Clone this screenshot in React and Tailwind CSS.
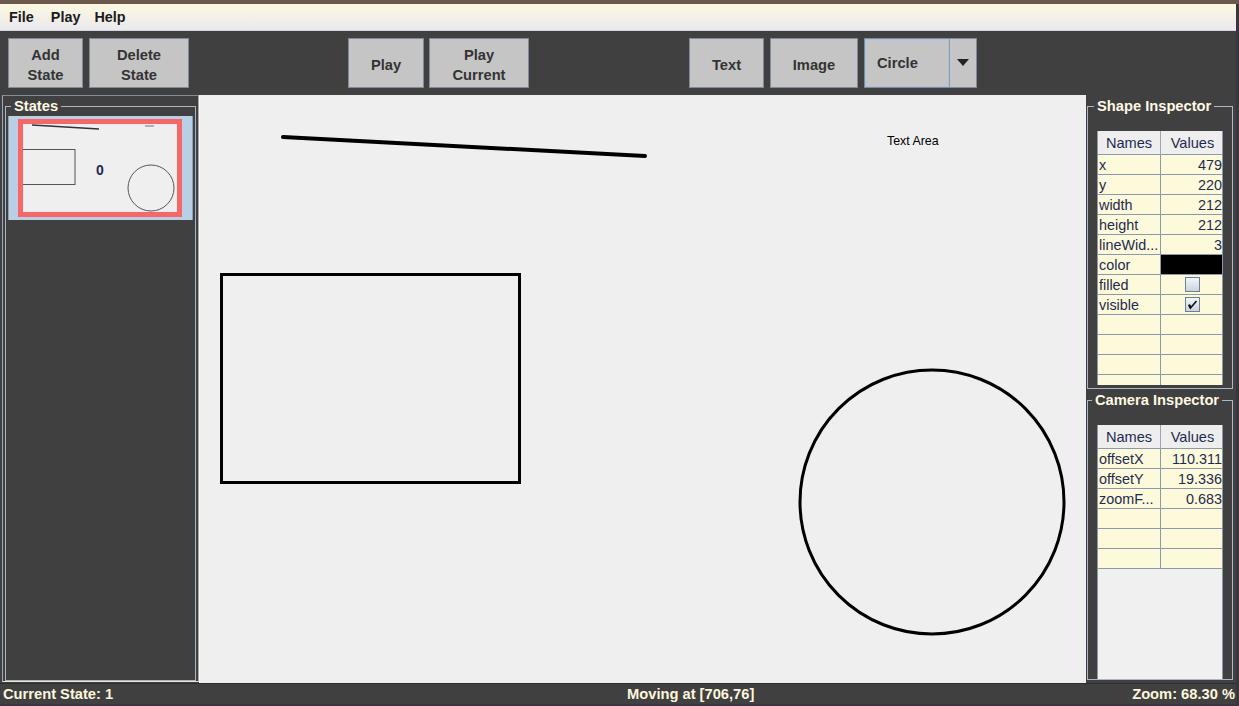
import React from "react";

const font = "font-['Liberation_Sans',Arial,sans-serif]";

function ToolButton({ lines, className = "" }) {
  return (
    <div
      className={`h-[50px] flex flex-col items-center justify-center pt-[5px] bg-[#c5c5c5] border border-[#7d8b9c] text-[#333333] font-bold text-[14.7px] leading-[20px] ${className}`}
    >
      {lines.map((l) => (
        <span key={l}>{l}</span>
      ))}
    </div>
  );
}

function Check({ checked }) {
  return (
    <div className="w-[15px] h-[15px] border border-[#6f7f93] bg-linear-to-b from-[#f4f7fb] to-[#c9d4e0] flex items-center justify-center">
      {checked && (
        <svg width="11" height="11" viewBox="0 0 11 11">
          <path d="M2 5.5 L3.5 9 L9.5 2" stroke="#111" strokeWidth="1.6" fill="none" />
          <path d="M2.2 6 L3.6 9" stroke="#111" strokeWidth="2.4" />
        </svg>
      )}
    </div>
  );
}

function Row({ name, value, kind }) {
  return (
    <div className="grid grid-cols-[63px_63px] h-[20px] border-b border-[#8d99ab] bg-[#fdfadc] text-[14.4px] leading-[20px] text-[#1f2a4e]">
      <div className="border-r border-[#8d99ab] pl-[1px] whitespace-nowrap overflow-hidden">{name}</div>
      {kind === "color" ? (
        <div className="bg-black" />
      ) : kind === "check" || kind === "checked" ? (
        <div className="flex items-center justify-center">
          <Check checked={kind === "checked"} />
        </div>
      ) : (
        <div className="text-right pr-[2px]">{value}</div>
      )}
    </div>
  );
}

function Table({ rows, empty, bg }) {
  return (
    <div className={`ml-[9px] w-[126px] h-[254px] overflow-hidden border-x border-[#8d99ab] ${bg}`}>
      <div className="grid grid-cols-[63px_63px] h-[24px] bg-[#eeeeee] border-b border-[#8d99ab] text-[14.6px] leading-[25px] text-[#1f2a4e]">
        <div className="text-center border-r border-[#9aa5b5]">Names</div>
        <div className="text-center">Values</div>
      </div>
      {rows.map((r) => (
        <Row key={r[0]} name={r[0]} value={r[1]} kind={r[2]} />
      ))}
      {Array.from({ length: empty }).map((_, i) => (
        <Row key={"e" + i} name="" value="" />
      ))}
    </div>
  );
}

export default function App() {
  return (
    <div className={`w-[1239px] h-[706px] bg-[#3b3540] ${font} overflow-hidden`}>
      <div className="h-[4px] bg-[#6b5a4c]" />
      <div className="w-[1236px] flex flex-col">
        {/* menu */}
        <div className="h-[27px] bg-linear-to-b from-[#fbf8e0] to-[#ebe9ee] flex items-center pt-[2px] text-[14.4px] font-bold text-[#1b1b1b] border-b border-[#d0d6de]">
          <span className="ml-[9px]">File</span>
          <span className="ml-[17px]">Play</span>
          <span className="ml-[14px]">Help</span>
        </div>

        {/* toolbar */}
        <div className="h-[64px] bg-[#404040] flex items-center pb-[1px]">
          <ToolButton lines={["Add", "State"]} className="ml-[8px] w-[75px]" />
          <ToolButton lines={["Delete", "State"]} className="ml-[6px] w-[100px]" />
          <ToolButton lines={["Play"]} className="ml-[159px] w-[76px]" />
          <ToolButton lines={["Play", "Current"]} className="ml-[5px] w-[100px]" />
          <ToolButton lines={["Text"]} className="ml-[160px] w-[75px]" />
          <ToolButton lines={["Image"]} className="ml-[6px] w-[88px]" />
          <div className="ml-[6px] w-[113px] h-[50px] flex bg-[#c5c5c5] border border-[#7d8b9c]">
            <div className="flex-1 border border-[#a8c4e0] flex items-center pl-[11px] pt-[2px] text-[14.7px] font-bold text-[#333333]">
              Circle
            </div>
            <div className="w-[27px] border-l border-[#8d99ab] flex items-center justify-center">
              <svg width="12" height="7" viewBox="0 0 12 7">
                <path d="M0 0 H12 L6 7 Z" fill="#222" />
              </svg>
            </div>
          </div>
        </div>

        {/* main */}
        <div className="h-[588px] flex overflow-hidden">
          {/* states panel */}
          <div className="w-[199px] bg-[#404040]">
            <div className="ml-[2px] w-[197px] h-[587px] border-x border-b border-t border-t-[#7f8fa0] border-x-[#9aaabb] border-b-[#e8e4cc]">
              <fieldset className="mt-[2px] ml-[2px] w-[191px] h-[583px] border border-[#a9b7c6]">
                <legend className="ml-[5px] px-[3px] text-[14.7px] leading-[16px] font-bold text-[#fff9e3]">
                  States
                </legend>
                <div className="mt-[2px] ml-[2px] w-[185px] h-[104px] bg-[#b8cfe6] border-x border-[#8aa2bd] flex items-center pl-[9px]">
                  <div className="w-[164px] h-[98px] border-[5px] border-[#f86666] bg-[#efefef] overflow-hidden">
                    <svg width="154" height="88" viewBox="0 0 154 88">
                      <line x1="9" y1="1" x2="76" y2="5" stroke="#333" strokeWidth="1.5" />
                      <line x1="122" y1="2" x2="131" y2="2" stroke="#777" strokeWidth="1" />
                      <rect x="-1" y="25.5" width="53" height="35" fill="none" stroke="#555" strokeWidth="1" />
                      <text x="73" y="51" fontSize="14" fontWeight="bold" fill="#1f2a4e" fontFamily="Liberation Sans, Arial, sans-serif">
                        0
                      </text>
                      <circle cx="128" cy="64" r="23" fill="none" stroke="#555" strokeWidth="1" />
                    </svg>
                  </div>
                </div>
              </fieldset>
            </div>
          </div>

          {/* canvas */}
          <div className="w-[887px] border-l border-[#fffbe0] bg-[#efefef]">
            <svg width="886" height="588" viewBox="0 0 886 588">
              <line x1="83" y1="42" x2="445" y2="61" stroke="#000" strokeWidth="4" strokeLinecap="round" />
              <rect x="21.5" y="179.5" width="298" height="208" fill="none" stroke="#000" strokeWidth="3" />
              <circle cx="732" cy="407" r="132" fill="none" stroke="#000" strokeWidth="3" />
              <text x="687" y="50" fontSize="12.4" fill="#000" fontFamily="Liberation Sans, Arial, sans-serif">
                Text Area
              </text>
            </svg>
          </div>

          {/* inspectors */}
          <div className="w-[150px] bg-[#404040]">
            <fieldset className="mt-[3px] ml-[1px] w-[146px] h-[291px] border border-[#a9b7c6]">
              <legend className="ml-[6px] px-[3px] text-[14.7px] leading-[16px] font-bold text-[#fff9e3] whitespace-nowrap">
                Shape Inspector
              </legend>
              <div className="mt-[17px]">
                <Table
                  bg="bg-[#fdfadc]"
                  empty={5}
                  rows={[
                    ["x", "479"],
                    ["y", "220"],
                    ["width", "212"],
                    ["height", "212"],
                    ["lineWid...", "3"],
                    ["color", "", "color"],
                    ["filled", "", "check"],
                    ["visible", "", "checked"],
                  ]}
                />
              </div>
            </fieldset>
            <fieldset className="mt-[3px] ml-[1px] w-[146px] h-[288px] border border-[#a9b7c6]">
              <legend className="ml-[4px] px-[3px] text-[14.7px] leading-[16px] font-bold text-[#fff9e3] whitespace-nowrap">
                Camera Inspector
              </legend>
              <div className="mt-[17px]">
                <Table
                  bg="bg-[#f0f0f0]"
                  empty={3}
                  rows={[
                    ["offsetX", "110.311"],
                    ["offsetY", "19.336"],
                    ["zoomF...", "0.683"],
                  ]}
                />
              </div>
            </fieldset>
          </div>
        </div>

        {/* status */}
        <div className="h-[21px] bg-[#404040] flex items-center text-[14.7px] font-bold text-[#fdf6dc] border-t border-[#2e2e2e]">
          <div className="w-[627px] pl-[3px]">Current State: 1</div>
          <div className="flex-1">Moving at [706,76]</div>
          <div className="pr-[1px]">Zoom: 68.30 %</div>
        </div>
      </div>
    </div>
  );
}
